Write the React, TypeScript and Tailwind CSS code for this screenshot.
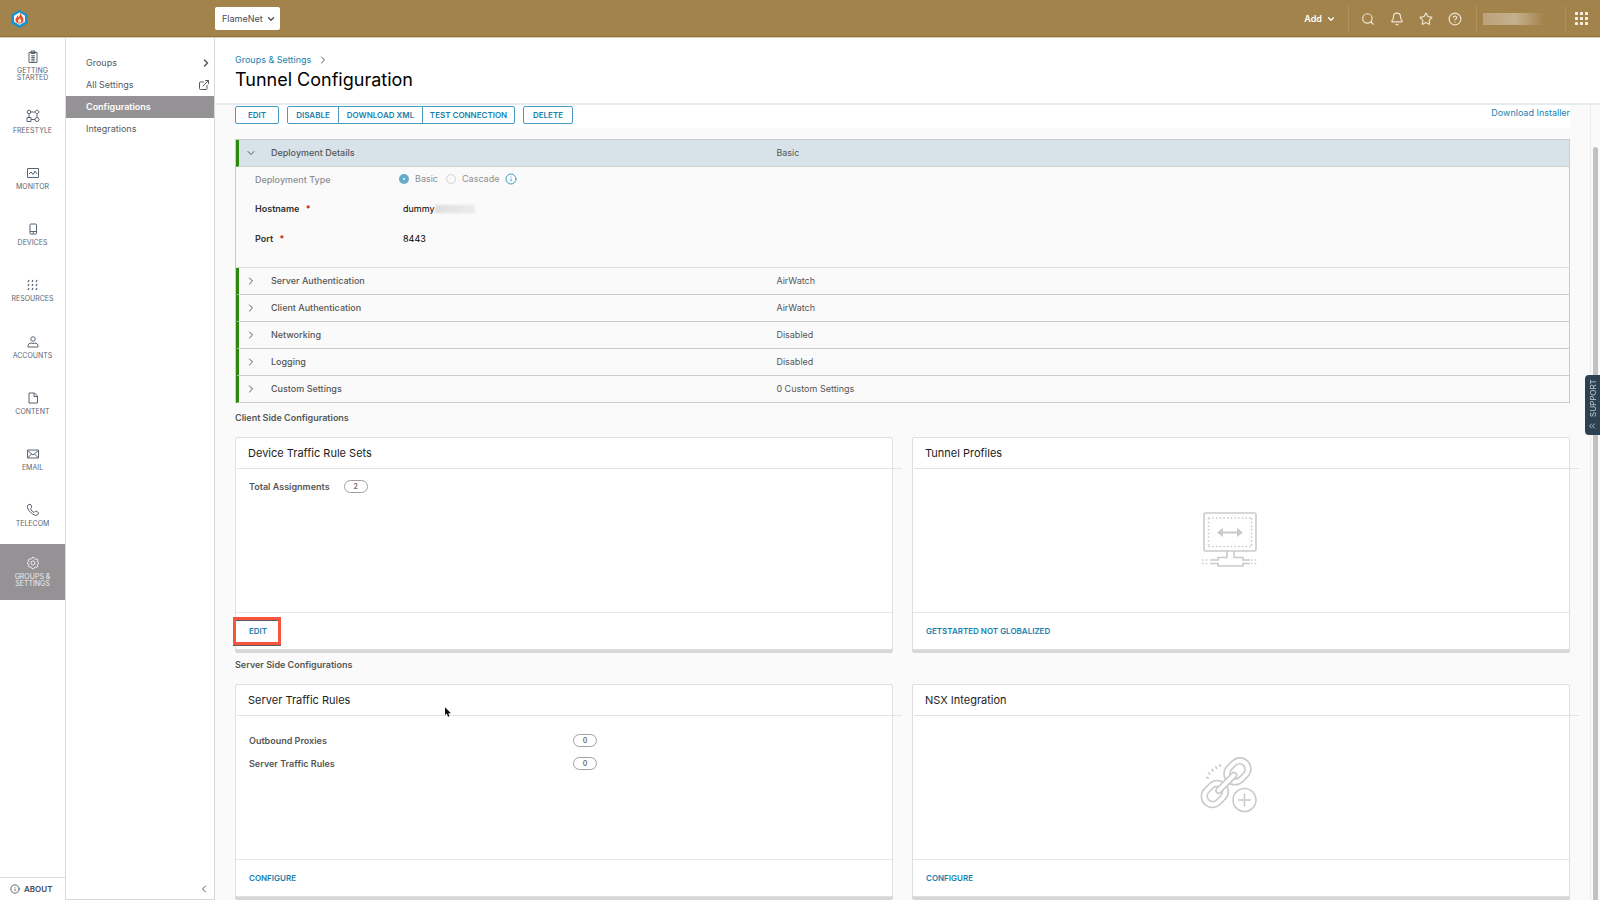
import React from "react";
import {
    Bell,
    ChevronDown,
    ChevronLeft,
    ChevronRight,
    ChevronsRight,
    CircleHelp,
    ExternalLink,
    Info,
    Search,
    Star,
} from "lucide-react";

type IconProps = { children: React.ReactNode };

function NavIcon({ children }: IconProps) {
    return (
        <svg viewBox="0 0 24 24" className="size-3 shrink-0 overflow-visible" fill="none" stroke="currentColor" strokeWidth="2" strokeLinejoin="round">
            {children}
        </svg>
    );
}

type NavEntry = {
    lines: string[];
    icon: React.ReactNode;
    active?: boolean;
}

const NAV: NavEntry[] = [
    {
        lines: ["Getting", "Started"],
        icon: (
            <>
                <rect x="4" y="3" width="16" height="20" />
                <rect x="8" y="0" width="8" height="5" fill="currentColor" fillOpacity="0.4" />
                <path d="M8 9.500h8M8 13h8M8 16.500h8M8 20h8M12 8v12" strokeWidth="1.600" />
            </>
        ),
    },
    {
        lines: ["Freestyle"],
        icon: (
            <>
                <circle cx="4" cy="2" r="3.500" />
                <path d="M20 -2.500l4.500 4.500-4.500 4.500-4.500-4.500z" />
                <rect x="0" y="13" width="8" height="8" />
                <circle cx="20" cy="17" r="4" />
                <path d="M7.500 2h8M4 5.500v7.500M20 6.500v6.500M8 17h8" />
            </>
        ),
    },
    {
        lines: ["Monitor"],
        icon: (
            <>
                <rect x="1" y="3" width="22" height="18" />
                <path d="M4 14l4-4 4 5 4-7 4 6" />
            </>
        ),
    },
    {
        lines: ["Devices"],
        icon: (
            <>
                <rect x="6" y="2" width="13" height="20" rx="1.500" />
                <path d="M6 17h13M12.500 18v3" />
            </>
        ),
    },
    {
        lines: ["Resources"],
        icon: <path d="M4 2l-2 4M12 2l-2 4M20 2l-2 4M4 10l-2 4M12 10l-2 4M20 10l-2 4M4 18l-2 4M12 18l-2 4M20 18l-2 4" strokeWidth="2.500" />,
    },
    {
        lines: ["Accounts"],
        icon: (
            <>
                <circle cx="12" cy="6" r="4.500" />
                <path d="M2 22v-3q1-5 6-5l4 1 4-1q5 0 6 5v3z" />
            </>
        ),
    },
    {
        lines: ["Content"],
        icon: <path d="M4 2h11l6 6v14H4zM14 2v7h7" />,
    },
    {
        lines: ["Email"],
        icon: <path d="M1 4h22v16H1zM1 5l11 9 11-9M1 20l8-8M23 20l-8-8" />,
    },
    {
        lines: ["Telecom"],
        icon: <path d="M2 2l4-1.500q2 0 3 4t-2 5q2 5 7 7.500 2-3 4.500-2.500 4 1 4.500 3.500l-2 4q-4 2-9.500-1.500Q1 13 .5 6q.2-3 1.500-4z" />,
    },
    {
        lines: ["Groups &", "Settings"],
        active: true,
        icon: (
            <>
                <path d="M10 1h4l1 3 2 1 3-1.500 1.500 3L20.500 9l2.500 1.500v3L20.500 15l1 3-2 3-3-1-1.500 1-1 2.500h-4L9 20.500l-1.500-1-3 1-2-3L4 15l-3-1.500v-3L3.500 9l-1-3 2-2.500 3 1L9 4z" />
                <circle cx="12" cy="12" r="4" />
            </>
        ),
    },
];

const SECTIONS = [
    { title: "Server Authentication", value: "AirWatch" },
    { title: "Client Authentication", value: "AirWatch" },
    { title: "Networking", value: "Disabled" },
    { title: "Logging", value: "Disabled" },
    { title: "Custom Settings", value: "0 Custom Settings" },
];

function Logo() {
    return (
        <svg viewBox="0 0 34 36" className="h-[18px] w-[17px]">
            <path d="M17 0l16 9v18l-16 9L1 27V9z" fill="#1494d2" />
            <path d="M17 5l11 6.500v12L17 30 6 23.500v-12z" fill="#f6f6f4" />
            <path d="M18 5c2 6 7 9 7 15 0 4-3 7-8 7s-8-3-8-7c0-4 3-5 4-9 2 2 2 3 2 4 3-3 3-6 3-10z" fill="#e2532b" />
            <path d="M17 16c3 3 4 5 3 8-1 2-5 2-6 0-1-3 2-4 3-8z" fill="#fbe3c8" />
        </svg>
    );
}

function Header() {
    return (
        <header className="flex h-[38px] shrink-0 items-center border-b border-[#d8cdb8] bg-[#a2834b] pl-[11px] text-white shadow-[inset_0_-1px_0_#94733a]">
            <a href="#" aria-label="Home" className="w-[204px]">
                <Logo />
            </a>
            <div className="relative flex items-center">
                <select aria-label="Organization group" className="h-[23px] w-[65px] appearance-none rounded-xs bg-white pl-[7px] text-[9px] text-[#454b55]">
                    <option>FlameNet</option>
                </select>
                <ChevronDown className="pointer-events-none absolute right-1 size-2.5 text-[#454b55]" strokeWidth={3} />
            </div>
            <div className="ml-auto flex items-center">
                <button className="mr-3 flex items-center gap-1 text-[9px] font-semibold">
                    Add
                    <ChevronDown className="size-2.5" strokeWidth={3} />
                </button>
                <div className="flex h-[26px] w-[129px] items-center gap-[15px] border-x border-[#b09256] pl-3 text-[#eee4d2]">
                    <button aria-label="Search"><Search className="size-3.5" /></button>
                    <button aria-label="Notifications"><Bell className="size-3.5" /></button>
                    <button aria-label="Favorites"><Star className="size-3.5" /></button>
                    <button aria-label="Help"><CircleHelp className="size-3.5" /></button>
                </div>
                <div className="flex h-[26px] w-[89px] items-center border-r border-[#b09256] pl-1.5">
                    <div className="h-3 w-[72px] bg-linear-to-r from-[#bba27b] via-[#c5b08e] via-45% to-[#a2834b] to-85%" />
                </div>
                <button aria-label="Applications" className="w-[34px] pl-[9px]">
                    <svg viewBox="0 0 13 13" className="size-[13px]" fill="#f4eee2">
                        {[0, 5, 10].map((y) => [0, 5, 10].map((x) => (
                            <rect key={`${x}-${y}`} x={x} y={y} width="3" height="3" rx="0.500" />
                        )))}
                    </svg>
                </button>
            </div>
        </header>
    );
}

function MainNav() {
    return (
        <nav aria-label="Main" className="flex w-[66px] shrink-0 flex-col border-r border-[#dcdcde] bg-white">
            <div className="flex h-[562px] flex-col">
                {NAV.map(({ lines, icon, active }) => (
                    <a
                        key={lines[0]}
                        href="#"
                        className={active
                            ? "flex flex-1 flex-col items-center justify-center gap-1 bg-[#949294] text-[#ececec]"
                            : "flex flex-1 flex-col items-center justify-center gap-1 text-[#5b6472]"}
                    >
                        <NavIcon>{icon}</NavIcon>
                        <span className="text-center text-[7px] leading-[7px] uppercase">
                            {lines.map((line) => <span key={line} className="block">{line}</span>)}
                        </span>
                    </a>
                ))}
            </div>
            <a href="#" className="mt-auto flex h-[23px] items-center gap-1 border-t border-[#dcdcde] pl-2.5 text-[8px] font-semibold text-[#454b55]">
                <Info className="size-2.5" strokeWidth={2} />
                ABOUT
            </a>
        </nav>
    );
}

function SubNav() {
    return (
        <nav aria-label="Groups and settings" className="flex w-[149px] shrink-0 flex-col border-r border-b border-[#d8d8da] bg-white pt-3.5 text-[9px] text-[#565b63]">
            <a href="#" className="flex h-[22px] items-center justify-between pr-0.5 pl-5">
                Groups
                <ChevronRight className="size-3" strokeWidth={3} />
            </a>
            <a href="#" className="flex h-[22px] items-center justify-between pr-1 pl-5">
                All Settings
                <ExternalLink className="size-3" strokeWidth={2} />
            </a>
            <a href="#" className="flex h-[22px] items-center bg-[#949294] pl-5 font-semibold text-white">Configurations</a>
            <a href="#" className="flex h-[22px] items-center pl-5">Integrations</a>
            <button aria-label="Collapse menu" className="mt-auto mr-1 mb-1 self-end">
                <ChevronLeft className="size-3" strokeWidth={2} />
            </button>
        </nav>
    );
}

function Toolbar() {
    return (
        <div className="flex h-[23px] items-start bg-white pt-px text-[#1b7fae]">
            <button className="h-[18px] w-11 rounded-xs border border-[#4a9cc2] text-[8px] font-semibold uppercase">Edit</button>
            <div className="mx-2 flex divide-x divide-[#4a9cc2] rounded-xs border border-[#4a9cc2]">
                <button className="h-4 w-[51px] text-[8px] font-semibold uppercase">Disable</button>
                <button className="h-4 w-[84px] text-[8px] font-semibold uppercase">Download XML</button>
                <button className="h-4 w-[91px] text-[8px] font-semibold uppercase">Test Connection</button>
            </div>
            <button className="h-[18px] w-[50px] rounded-xs border border-[#4a9cc2] text-[8px] font-semibold uppercase">Delete</button>
            <a href="#" className="ml-auto text-[9px] leading-3.5 text-[#1b7fae]">Download Installer</a>
        </div>
    );
}

type SectionRowProps = {
    title: string;
    value: string;
    open?: boolean;
}

function SectionRow({ title, value, open = false }: SectionRowProps) {
    return (
        <button
            aria-expanded={open}
            className={open
                ? "flex h-[27px] w-full items-center border-b border-l-3 border-b-[#cfcfcf] border-l-[#2b8a0b] bg-[#d8e3e9] text-left"
                : "flex h-[27px] w-full items-center border-b border-l-3 border-b-[#cccccc] border-l-[#2b8a0b] text-left"}
        >
            <span className="flex w-8 pl-1.5">
                {open ? <ChevronDown className="size-3" strokeWidth={2} /> : <ChevronRight className="size-3" strokeWidth={2} />}
            </span>
            <span className="w-[38%] font-medium">{title}</span>
            <span>{value}</span>
        </button>
    );
}

function Deployment() {
    return (
        <section className="mt-[11px] border-x border-t border-[#cccccc] text-[9px] text-[#565656]">
            <SectionRow title="Deployment Details" value="Basic" open />
            <div className="h-[101px] border-b border-[#dedede] pl-[19px]">
                <fieldset disabled className="flex h-6 items-center text-[#8f8f8f]">
                    <legend className="float-left w-36 pt-px font-medium">Deployment Type</legend>
                    <label className="flex items-center gap-1.5">
                        <input type="radio" name="type" defaultChecked className="size-2.5 appearance-none rounded-full border-4 border-[#65abcc] bg-white" />
                        Basic
                    </label>
                    <label className="ml-2 flex items-center gap-1.5">
                        <input type="radio" name="type" className="size-2.5 appearance-none rounded-full border border-[#d4d4d4]" />
                        Cascade
                    </label>
                    <Info className="ml-1.5 size-3 text-[#4a9cc2]" strokeWidth={2} />
                </fieldset>
                <dl className="text-[#313131]">
                    <div className="flex h-[35px] items-center">
                        <dt className="w-[148px] font-semibold">
                            Hostname <span className="ml-1 align-top text-[#c92100]">*</span>
                        </dt>
                        <dd className="flex items-center text-black">
                            dummy
                            <span className="h-2 w-10 bg-linear-to-r from-[#dedede] to-[#ececec] blur-[1px]" />
                        </dd>
                    </div>
                    <div className="flex h-[26px] items-center">
                        <dt className="w-[148px] font-semibold">
                            Port <span className="ml-1 align-top text-[#c92100]">*</span>
                        </dt>
                        <dd className="text-black">8443</dd>
                    </div>
                </dl>
            </div>
            {SECTIONS.map((section) => <SectionRow key={section.title} {...section} />)}
        </section>
    );
}

type CardProps = {
    title: string;
    action: string;
    highlighted?: boolean;
    children: React.ReactNode;
}

function Card({ title, action, highlighted, children }: CardProps) {
    return (
        <section className="flex flex-col rounded-xs border border-[#dfdfdf] bg-white shadow-[0_3px_0_#d7d7d7]">
            <h3 className="mr-[-10px] ml-px h-[31px] border-b border-[#e4e4e4] pl-[11px] text-[11px] leading-[30px] text-[#1c1c1c]">{title}</h3>
            <div className="h-[143px]">{children}</div>
            <div className="flex h-[37px] items-center border-t border-[#e8e8e8] pl-[13px]">
                <button className="relative text-[8px] font-semibold text-[#1b7fae] uppercase">
                    {action}
                    {highlighted && (
                        <span className="absolute -inset-y-2 -right-3.5 -left-4 border-3 border-[#f9543f] shadow-[0_1px_0_#5b6064,inset_0_1px_0_#5b6064]" />
                    )}
                </button>
            </div>
        </section>
    );
}

function Count({ value }: { value: number }) {
    return (
        <span className="inline-flex h-[13px] w-6 items-center justify-center rounded-full border border-[#a0a0a0] text-[7px] leading-[11px] text-[#6c6c6c]">
            {value}
        </span>
    );
}

function TunnelArt() {
    return (
        <svg viewBox="0 0 56 56" className="size-14" fill="none" stroke="#cacaca" strokeWidth="1.600">
            <rect x="2" y="1" width="52" height="38" rx="1.500" />
            <path d="M6.500 6h43M6.500 34.500h43M6.500 6v29M49.500 6v29" strokeDasharray="1.500 2.200" />
            <path d="M19 20.500h18" strokeWidth="2" />
            <path d="M15 20.500l6-4.500v9zM41 20.500l-6-4.500v9z" fill="#cacaca" stroke="none" />
            <path d="M25 39v6.500h-9v2.500H8M32 39v6.500h9v2.500h7M8 51.500h8V54h25v-2.500h7" />
            <path d="M0 48h7M0 51.500h7M49 48h7M49 51.500h7" strokeDasharray="1.500 2.200" />
        </svg>
    );
}

function LinkArt() {
    return (
        <svg viewBox="0 0 56 56" className="size-14 overflow-visible" fill="none" stroke="#cacaca" strokeWidth="1.600">
            <g transform="translate(-3 0) rotate(-45 27.500 27)">
                <rect x="-3" y="15.500" width="29" height="22" rx="11" />
                <rect x="3" y="21" width="17" height="11" rx="5.500" />
                <rect x="29" y="15.500" width="29" height="22" rx="11" />
                <rect x="35" y="21" width="17" height="11" rx="5.500" />
                <rect x="14" y="24" width="27" height="5.500" rx="2.750" fill="white" />
            </g>
            <path d="M4 21l3 1.500M6 16.500l2.500 2M9.500 13l2 2.500M13.500 10l1.500 3M17.500 8l1 3" />
            <circle cx="42.500" cy="44" r="11.500" fill="white" />
            <path d="M42.500 37.500v13M36 44h13" />
        </svg>
    );
}

function Cursor() {
    return (
        <svg viewBox="0 0 10 16" className="absolute top-[707px] left-[445px] h-2.5 w-1.5">
            <path d="M0 0v13l3-2.500L5 16l2.500-1-2-5H10z" fill="#111" />
        </svg>
    );
}

export default function App() {
    return (
        <div className="relative flex h-screen flex-col overflow-hidden bg-[#fafafa] font-['Inter',sans-serif]">
            <Header />
            <div className="flex min-h-0 flex-1">
                <MainNav />
                <SubNav />
                <main className="flex min-w-0 flex-1 flex-col">
                    <div className="h-[67px] shrink-0 border-b-2 border-[#e4ecee] bg-white pt-[15px] pl-5">
                        <div className="flex items-center gap-1.5 text-[9px] leading-3.5">
                            <a href="#" className="text-[#1b7fae]">Groups &amp; Settings</a>
                            <ChevronRight className="size-3 text-[#565656]" strokeWidth={2} />
                        </div>
                        <h1 className="mt-px text-[18px] leading-6 text-black">Tunnel Configuration</h1>
                    </div>
                    <div className="flex min-h-0 flex-1">
                        <div className="min-w-0 flex-1 overflow-hidden px-5">
                            <Toolbar />
                            <Deployment />
                            <h2 className="mt-2 mb-3 text-[9px] leading-3.5 font-semibold text-[#565656]">Client Side Configurations</h2>
                            <div className="grid grid-cols-2 gap-[19px]">
                                <Card title="Device Traffic Rule Sets" action="Edit" highlighted>
                                    <div className="flex items-center gap-3.5 pt-[11px] pl-[13px] text-[9px] font-semibold text-[#565656]">
                                        Total Assignments
                                        <Count value={2} />
                                    </div>
                                </Card>
                                <Card title="Tunnel Profiles" action="GetStarted Not Globalized">
                                    <div className="flex h-full items-center justify-center pr-[22px] pb-0.5">
                                        <TunnelArt />
                                    </div>
                                </Card>
                            </div>
                            <h2 className="mt-2 mb-3 text-[9px] leading-3.5 font-semibold text-[#565656]">Server Side Configurations</h2>
                            <div className="grid grid-cols-2 gap-[19px]">
                                <Card title="Server Traffic Rules" action="Configure">
                                    <dl className="pt-[13px] pl-[13px] text-[9px] font-semibold text-[#565656]">
                                        <div className="flex h-[23px] items-center">
                                            <dt className="w-81">Outbound Proxies</dt>
                                            <dd className="flex"><Count value={0} /></dd>
                                        </div>
                                        <div className="flex h-[23px] items-center">
                                            <dt className="w-81">Server Traffic Rules</dt>
                                            <dd className="flex"><Count value={0} /></dd>
                                        </div>
                                    </dl>
                                </Card>
                                <Card title="NSX Integration" action="Configure">
                                    <div className="flex h-full items-center justify-center pr-[22px] pb-2">
                                        <LinkArt />
                                    </div>
                                </Card>
                            </div>
                        </div>
                        <div className="flex w-2.5 shrink-0 justify-center border-l border-[#ececec] pt-[42px]">
                            <div className="w-[5px] rounded-t-full bg-[#c1c1c1]" />
                        </div>
                    </div>
                </main>
            </div>
            <button className="absolute top-[375px] right-0 flex h-[60px] w-[15px] rotate-180 items-center justify-center gap-1 rounded-r-sm bg-[#2c4252] text-[8px] text-[#c3ccd3] [writing-mode:vertical-rl]">
                <ChevronsRight className="size-2.5" strokeWidth={2} />
                SUPPORT
            </button>
            <Cursor />
        </div>
    );
}
